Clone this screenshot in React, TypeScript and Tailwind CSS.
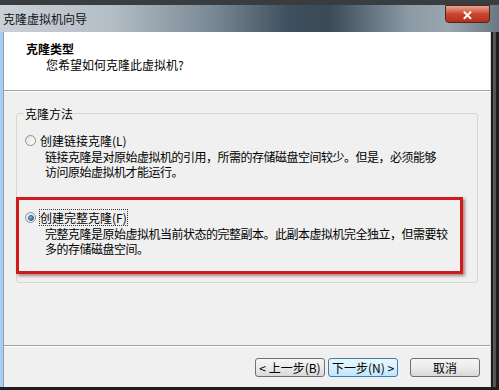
import React from 'react'

const font = { fontFamily: '"Noto Sans CJK SC", "Noto Sans", sans-serif' }

function Radio({ checked }: { checked?: boolean }) {
  return (
    <span className="w-[11px] h-[11px] rounded-full border border-[#8e8f8f] bg-gradient-to-br from-[#e0e0e0] to-[#ffffff] flex items-center justify-center shrink-0">
      {checked && <span className="w-[6px] h-[6px] rounded-full bg-gradient-to-br from-[#a6d6f4] to-[#1e5f92] border border-[#1d5a8a]" />}
    </span>
  )
}

function Btn({ children, primary }: { children: React.ReactNode; primary?: boolean }) {
  return (
    <div
      className={`w-[70px] h-[19px] rounded-[3px] border flex items-center justify-center text-[12px] leading-none text-black ${
        primary
          ? 'border-[#3c7fb1] bg-gradient-to-b from-[#eaf6fd] via-[#d9f0fc] to-[#bee6fd]'
          : 'border-[#707070] bg-gradient-to-b from-[#f5f5f5] via-[#ebebeb] to-[#d8d8d8]'
      }`}
    >
      {children}
    </div>
  )
}

export default function App() {
  return (
    <div style={font} className="relative w-[499px] h-[390px] overflow-hidden bg-[#2e2e2e] flex flex-col">
      {/* top strip */}
      <div className="h-[5px] bg-[#3a3d40]" />

      {/* title bar */}
      <div className="h-[27px] flex items-center pl-[3px] bg-[linear-gradient(to_right,#c9d1d8_0%,#b4bec6_22%,#7b8a96_42%,#3e4f5d_58%,#3a4a57_66%,#8c9aa5_82%,#9aa6b0_90%,#6a7884_100%)]">
        <span className="text-[12px] text-[#111]">克隆虚拟机向导</span>
      </div>

      {/* close button */}
      <div className="absolute left-[445px] top-[5px] w-[45px] h-[18px] rounded-b-[4px] border border-[#4a2620] bg-gradient-to-b from-[#e6a593] via-[#c9452d] to-[#b4301c] flex items-center justify-center">
        <span className="text-white text-[13px] font-bold leading-none">✕</span>
      </div>

      <div className="flex flex-1">
        {/* left frame */}
        <div className="w-[4px] bg-[#a9cdef] border-r border-[#8aa0b5]" />

        {/* client area */}
        <div className="flex-1 flex flex-col bg-[#f0f0f0]">
          {/* header */}
          <div className="h-[58px] bg-white pt-[10px]">
            <div className="pl-[22px] text-[12px] leading-[14px] font-bold text-black">克隆类型</div>
            <div className="pl-[42px] mt-[2px] text-[12px] leading-[14px] text-black">您希望如何克隆此虚拟机?</div>
          </div>
          <div className="h-px bg-[#a0a0a0]" />
          <div className="h-px bg-white" />

          {/* body */}
          <div className="flex-1 flex flex-col">
            <fieldset className="ml-[12px] w-[462px] mt-[14px] border border-[#d5d5d5] rounded-[3px] px-[7px] pb-[26px] text-[12px] leading-[15px] text-black">
              <legend className="px-px">克隆方法</legend>
              <div className="flex items-center gap-[4px] mt-[12px] ml-[1px]">
                <Radio />
                <span>创建链接克隆(L)</span>
              </div>
              <div className="pl-[21px] mt-[1px] tracking-[-0.5px]">
                链接克隆是对原始虚拟机的引用，所需的存储磁盘空间较少。但是，必须能够
                <br />
                访问原始虚拟机才能运行。
              </div>
              <div className="flex items-center gap-[4px] mt-[31px] ml-[1px]">
                <Radio checked />
                <span className="outline outline-1 outline-dotted outline-[#333]">创建完整克隆(F)</span>
              </div>
              <div className="pl-[21px] mt-px tracking-[-0.5px]">
                完整克隆是原始虚拟机当前状态的完整副本。此副本虚拟机完全独立，但需要较
                <br />
                多的存储磁盘空间。
              </div>
            </fieldset>

            <div className="mt-auto h-px bg-[#a0a0a0]" />
            <div className="h-px bg-white" />
            <div className="h-[40px] flex items-start justify-end pt-[11px] pr-[10px]">
              <Btn>&lt; 上一步(B)</Btn>
              <div className="w-[3px]" />
              <Btn primary>下一步(N) &gt;</Btn>
              <div className="w-[12px]" />
              <Btn>取消</Btn>
            </div>
          </div>
        </div>

        {/* right frame */}
        <div className="w-[9px] bg-[linear-gradient(to_right,#d8d8d8_0%,#d8d8d8_11%,#1c1c1c_11%,#1c1c1c_33%,#5a5f63_33%,#4a4f53_70%,#1e1e1e_70%)]" />
      </div>

      {/* bottom frame */}
      <div className="h-[3px] bg-[#1e1e1e]" />

      {/* red highlight annotation */}
      <div className="absolute left-[16px] top-[197px] w-[447px] h-[77px] border-[3px] border-[#d01b1b] shadow-[2px_2px_3px_rgba(80,0,0,0.45)]" />
    </div>
  )
}
